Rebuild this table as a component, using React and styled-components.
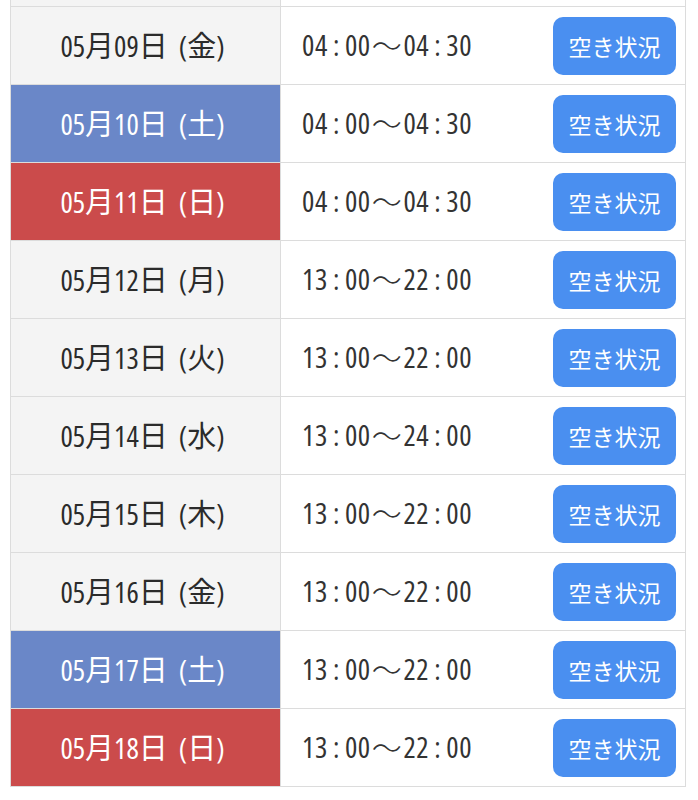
import styled, { createGlobalStyle } from "styled-components";

const GlobalStyle = createGlobalStyle`
  html, body {
    margin: 0;
    padding: 0;
    background: #fff;
  }
  body {
    font-family: "Open Sans", "Noto Sans CJK JP", sans-serif;
    overflow: hidden;
  }
`;

const days = [
  { date: "05月09日", wd: "金", time: ["04", "00", "04", "30"] },
  { date: "05月10日", wd: "土", time: ["04", "00", "04", "30"], kind: "sat" },
  { date: "05月11日", wd: "日", time: ["04", "00", "04", "30"], kind: "sun" },
  { date: "05月12日", wd: "月", time: ["13", "00", "22", "00"] },
  { date: "05月13日", wd: "火", time: ["13", "00", "22", "00"] },
  { date: "05月14日", wd: "水", time: ["13", "00", "24", "00"] },
  { date: "05月15日", wd: "木", time: ["13", "00", "22", "00"] },
  { date: "05月16日", wd: "金", time: ["13", "00", "22", "00"] },
  { date: "05月17日", wd: "土", time: ["13", "00", "22", "00"], kind: "sat" },
  { date: "05月18日", wd: "日", time: ["13", "00", "22", "00"], kind: "sun" },
];

const Page = styled.div`
  width: 698px;
  height: 800px;
  overflow: hidden;
`;

const Table = styled.div`
  margin: 0 12px 0 10px;
  border-left: 1px solid #dcdcdc;
  border-right: 1px solid #dcdcdc;
  border-bottom: 1px solid #dcdcdc;
`;

const Row = styled.div`
  display: grid;
  grid-template-columns: 270px 1fr auto;
  height: ${(p) => (p.$stub ? "6px" : "77px")};
  border-bottom: 1px solid #dcdcdc;
  &:last-child {
    border-bottom: none;
  }
`;

const bg = { sat: "#6a87c8", sun: "#cb4b4b" };

const DateCell = styled.div`
  display: flex;
  align-items: center;
  justify-content: center;
  background: ${(p) => bg[p.$kind] || "#f4f4f4"};
  color: ${(p) => (p.$kind ? "#fff" : "#2b2b2b")};
  border-right: 1px solid #dcdcdc;
  font-size: 29px;
  font-weight: 400;
  font-stretch: 80%;
  padding: 0 6px 3px 0;
`;

const Weekday = styled.span`
  margin-left: 11px;
`;

const TimeCell = styled.div`
  display: flex;
  align-items: center;
  padding: 0 0 3px 21px;
  font-size: 29px;
  font-weight: 400;
  font-stretch: 80%;
  color: #333;
  letter-spacing: 0.6px;
`;

const Colon = styled.span`
  margin: 0 5px;
`;

const Wave = styled.span`
  font-family: "Noto Sans CJK JP", sans-serif;
  font-weight: 300;
  font-size: 30px;
  margin: 0 1px;
`;

const ButtonCell = styled.div`
  display: flex;
  align-items: center;
  padding-right: 9px;
`;

const Button = styled.button`
  width: 123px;
  height: 58px;
  border: none;
  border-radius: 10px;
  background: #4a8ff0;
  color: #fff;
  font-family: "Noto Sans CJK JP", sans-serif;
  font-size: 23px;
  padding: 0;
  cursor: pointer;
`;

export default function App() {
  return (
    <Page>
      <GlobalStyle />
      <Table>
        <Row $stub>
          <DateCell />
          <div />
          <div />
        </Row>
        {days.map((d) => (
          <Row key={d.date}>
            <DateCell $kind={d.kind}>
              {d.date}
              <Weekday>({d.wd})</Weekday>
            </DateCell>
            <TimeCell>
              {d.time[0]}
              <Colon>:</Colon>
              {d.time[1]}
              <Wave>〜</Wave>
              {d.time[2]}
              <Colon>:</Colon>
              {d.time[3]}
            </TimeCell>
            <ButtonCell>
              <Button>空き状況</Button>
            </ButtonCell>
          </Row>
        ))}
      </Table>
    </Page>
  );
}
